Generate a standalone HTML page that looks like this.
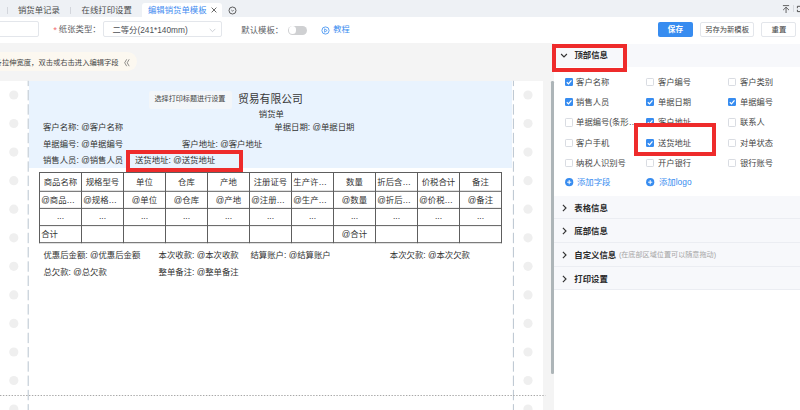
<!DOCTYPE html>
<html lang="zh-CN"><head><meta charset="utf-8"><title>编辑销货单模板</title><style>
html,body{margin:0;padding:0}
body{width:800px;height:410px;overflow:hidden;position:relative;background:#f4f4f4;font-family:"Liberation Sans","Noto Sans CJK SC",sans-serif}
.b{position:absolute;box-sizing:border-box}
.tx{position:absolute;line-height:1;white-space:nowrap;font-family:"Liberation Sans","Noto Sans CJK SC",sans-serif}
.tx span{position:absolute;left:0;top:0;width:100%;height:100%;overflow:visible;color:inherit;white-space:nowrap;line-height:1}
.ic{position:absolute;overflow:visible}
</style></head><body>
<div class="b" style="left:0.00px;top:0.00px;width:800.00px;height:17.40px;background:#eef1f5"></div>
<div class="b" style="left:142.00px;top:2.70px;width:80.00px;height:15.20px;background:#fff;border-radius:3px 3px 0 0"></div>
<div class="b" style="left:7.00px;top:7.30px;width:1.00px;height:6.50px;background:#d3d6dc"></div>
<div class="b" style="left:70.00px;top:7.30px;width:1.00px;height:6.50px;background:#d3d6dc"></div>
<div class="tx" style="left:17.90px;top:6.00px;width:42.00px;height:8.40px;font-size:8.40px;color:#4d4d4d"><span>销货单记录</span></div>
<div class="tx" style="left:81.60px;top:6.00px;width:50.40px;height:8.40px;font-size:8.40px;color:#4d4d4d"><span>在线打印设置</span></div>
<div class="tx" style="left:148.00px;top:6.00px;width:58.80px;height:8.40px;font-size:8.40px;color:#3f8cf0"><span>编辑销货单模板</span></div>
<svg class="ic" style="left:211px;top:7.2px" width="6" height="6" viewBox="0 0 6 6"><path d="M0.6 0.6L5.4 5.4M5.4 0.6L0.6 5.4" stroke="#444" stroke-width="0.8" fill="none"/></svg>
<svg class="ic" style="left:227.8px;top:5.5px" width="9" height="9" viewBox="0 0 9 9"><circle cx="4.5" cy="4.5" r="3.5" stroke="#444" stroke-width="0.85" fill="none"/><path d="M3.4 4.1L4.5 5.2L5.6 4.1" stroke="#444" stroke-width="0.8" fill="none"/></svg>
<svg class="ic" style="left:781px;top:4.5px" width="10" height="9" viewBox="0 0 10 9"><path d="M1.9 0.6H8.1M5.05 2.3V8M2.1 5.1L5.05 2.2L8 5.1" stroke="#4a4a4a" stroke-width="0.85" fill="none"/></svg>
<div class="b" style="left:792.80px;top:5.20px;width:1.00px;height:6.50px;background:#d6d9de"></div>
<svg class="ic" style="left:796px;top:5px" width="8" height="8" viewBox="0 0 8 8"><path d="M1.4 3.2V1.3H4M1.4 4.8V6.6H4" stroke="#444" stroke-width="0.9" fill="none"/></svg>
<div class="b" style="left:0.00px;top:17.40px;width:800.00px;height:25.30px;background:#fff"></div>
<div class="b" style="left:-5.00px;top:21.30px;width:43.80px;height:16.00px;background:#fff;border:1px solid #e3e6eb;border-radius:2px"></div>
<div class="tx" style="left:53.20px;top:24.60px;width:3.74px;height:9.60px;font-size:9.60px;color:#f26d6d"><span>*</span></div>
<div class="tx" style="left:58.80px;top:25.40px;width:42.00px;height:8.40px;font-size:8.40px;color:#606266"><span>纸张类型：</span></div>
<div class="b" style="left:103.20px;top:21.30px;width:118.80px;height:16.00px;background:#fff;border:1px solid #e3e6eb;border-radius:2px"></div>
<div class="tx" style="left:112.50px;top:25.65px;width:75.18px;height:8.30px;font-size:8.30px;color:#4e5156"><span>二等分(241*140mm)</span></div>
<svg class="ic" style="left:208.5px;top:27.5px" width="7" height="5" viewBox="0 0 7 5"><path d="M0.7 0.9L3.5 3.7L6.3 0.9" stroke="#c0c4cc" stroke-width="0.8" fill="none"/></svg>
<div class="tx" style="left:241.30px;top:25.60px;width:42.00px;height:8.40px;font-size:8.40px;color:#606266"><span>默认模板：</span></div>
<div class="b" style="left:288.00px;top:25.50px;width:19.10px;height:9.20px;background:#cfd0d2;border-radius:4.6px"></div>
<div class="b" style="left:288.90px;top:26.40px;width:7.40px;height:7.40px;background:#fff;border-radius:3.7px"></div>
<svg class="ic" style="left:321.3px;top:26px" width="9" height="9" viewBox="0 0 9 9"><circle cx="4.5" cy="4.5" r="3.6" stroke="#378cf0" stroke-width="0.8" fill="none"/><path d="M3.6 2.8L6.2 4.5L3.6 6.2Z" stroke="#378cf0" stroke-width="0.7" fill="none" stroke-linejoin="round"/></svg>
<div class="tx" style="left:333.20px;top:26.40px;width:16.40px;height:8.20px;font-size:8.20px;color:#378cf0"><span>教程</span></div>
<div class="b" style="left:657.60px;top:22.00px;width:35.60px;height:15.20px;background:#378cf0;border-radius:2px"></div>
<div class="tx" style="left:667.80px;top:25.80px;width:15.20px;height:7.60px;font-size:7.60px;color:#fff;font-weight:bold"><span>保存</span></div>
<div class="b" style="left:700.00px;top:22.00px;width:54.20px;height:15.20px;background:#fff;border:1px solid #e3e6eb;border-radius:2px"></div>
<div class="tx" style="left:705.20px;top:25.95px;width:43.80px;height:7.30px;font-size:7.30px;color:#444"><span>另存为新模板</span></div>
<div class="b" style="left:761.30px;top:22.00px;width:35.20px;height:15.20px;background:#fff;border:1px solid #e3e6eb;border-radius:2px"></div>
<div class="tx" style="left:771.50px;top:25.90px;width:14.80px;height:7.40px;font-size:7.40px;color:#444"><span>重置</span></div>
<div class="b" style="left:-12.00px;top:52.30px;width:148.70px;height:18.90px;background:#fcf8f0;border-radius:9.5px"></div>
<div class="tx" style="left:-5.40px;top:58.65px;width:124.10px;height:7.30px;font-size:7.30px;color:#474747"><span>条拉伸宽度，双击或右击进入编辑字段</span></div>
<svg class="ic" style="left:123.6px;top:58.5px" width="6" height="7.5" viewBox="0 0 6 7.5"><path d="M2.7 0.3L0.7 3.75L2.7 7.2M5.2 0.3L3.2 3.75L5.2 7.2" stroke="#555" stroke-width="0.65" fill="none"/></svg>
<div class="b" style="left:0.00px;top:80.80px;width:543.00px;height:330.00px;background:#fff"></div>
<div class="b" style="left:28.70px;top:80.80px;width:483.50px;height:87.70px;background:#e9f3fe"></div>
<svg class="ic" style="left:0;top:0" width="800" height="410" viewBox="0 0 800 410"><g fill="#efefef"><circle cx="13.8" cy="95.0" r="4.6"/><circle cx="528" cy="95.0" r="4.6"/><circle cx="13.8" cy="123.5" r="4.6"/><circle cx="528" cy="123.5" r="4.6"/><circle cx="13.8" cy="152.1" r="4.6"/><circle cx="528" cy="152.1" r="4.6"/><circle cx="13.8" cy="180.7" r="4.6"/><circle cx="528" cy="180.7" r="4.6"/><circle cx="13.8" cy="209.2" r="4.6"/><circle cx="528" cy="209.2" r="4.6"/><circle cx="13.8" cy="237.8" r="4.6"/><circle cx="528" cy="237.8" r="4.6"/><circle cx="13.8" cy="266.3" r="4.6"/><circle cx="528" cy="266.3" r="4.6"/><circle cx="13.8" cy="294.9" r="4.6"/><circle cx="528" cy="294.9" r="4.6"/><circle cx="13.8" cy="323.4" r="4.6"/><circle cx="528" cy="323.4" r="4.6"/><circle cx="13.8" cy="352.0" r="4.6"/><circle cx="528" cy="352.0" r="4.6"/><circle cx="13.8" cy="380.5" r="4.6"/><circle cx="528" cy="380.5" r="4.6"/><circle cx="13.8" cy="409.1" r="4.6"/><circle cx="528" cy="409.1" r="4.6"/></g><path d="M28.2 80.8V410M513.4 80.8V410" stroke="#b9c4cf" stroke-width="1" stroke-dasharray="10.4 3.88" stroke-dashoffset="5.1" fill="none"/><path d="M0 395.5H545.5" stroke="#a8a8a8" stroke-width="1" stroke-dasharray="1.4 1.5" fill="none"/></svg>
<div class="b" style="left:148.80px;top:91.00px;width:83.30px;height:17.80px;background:#f3f6f9;border-radius:2px"></div>
<div class="tx" style="left:154.50px;top:96.15px;width:71.00px;height:7.10px;font-size:7.10px;color:#444"><span>选择打印标题进行设置</span></div>
<div class="tx" style="left:238.00px;top:94.10px;width:64.80px;height:10.80px;font-size:10.80px;color:#383838"><span>贸易有限公司</span></div>
<div class="tx" style="left:258.80px;top:109.60px;width:25.20px;height:8.40px;font-size:8.40px;color:#333"><span>销货单</span></div>
<div class="tx" style="left:43.00px;top:122.80px;width:80.39px;height:8.40px;font-size:8.40px;color:#333"><span>客户名称: @客户名称</span></div>
<div class="tx" style="left:274.30px;top:122.80px;width:80.39px;height:8.40px;font-size:8.40px;color:#333"><span>单据日期: @单据日期</span></div>
<div class="tx" style="left:43.00px;top:139.60px;width:80.39px;height:8.40px;font-size:8.40px;color:#333"><span>单据编号: @单据编号</span></div>
<div class="tx" style="left:182.00px;top:139.60px;width:80.39px;height:8.40px;font-size:8.40px;color:#333"><span>客户地址: @客户地址</span></div>
<div class="tx" style="left:43.00px;top:156.40px;width:80.39px;height:8.40px;font-size:8.40px;color:#333"><span>销售人员: @销售人员</span></div>
<div class="tx" style="left:135.00px;top:156.40px;width:80.39px;height:8.40px;font-size:8.40px;color:#333"><span>送货地址: @送货地址</span></div>
<svg class="ic" style="left:0;top:0" width="800" height="410" viewBox="0 0 800 410"><path d="M39.5 172.0V243.2M81.5 172.0V243.2M123.5 172.0V243.2M165.5 172.0V243.2M207.5 172.0V243.2M249.5 172.0V243.2M291.5 172.0V243.2M333.5 172.0V243.2M375.5 172.0V243.2M417.5 172.0V243.2M459.5 172.0V243.2M501.5 172.0V243.2M39.0 172.5H502.0M39.0 191.3H502.0M39.0 208.4H502.0M39.0 225.6H502.0M39.0 242.7H502.0" stroke="#5e5e5e" stroke-width="1" fill="none"/></svg>
<div class="tx" style="left:43.70px;top:177.60px;width:33.60px;height:8.40px;font-size:8.40px;color:#333"><span>商品名称</span></div>
<div class="tx" style="left:41.30px;top:196.10px;width:33.73px;height:8.40px;font-size:8.40px;color:#333"><span>@商品…</span></div>
<div class="tx" style="left:57.00px;top:212.40px;width:7.00px;height:8.40px;font-size:8.40px;color:#333"><span>...</span></div>
<div class="tx" style="left:85.70px;top:177.60px;width:33.60px;height:8.40px;font-size:8.40px;color:#333"><span>规格型号</span></div>
<div class="tx" style="left:83.30px;top:196.10px;width:33.73px;height:8.40px;font-size:8.40px;color:#333"><span>@规格…</span></div>
<div class="tx" style="left:99.00px;top:212.40px;width:7.00px;height:8.40px;font-size:8.40px;color:#333"><span>...</span></div>
<div class="tx" style="left:136.10px;top:177.60px;width:16.80px;height:8.40px;font-size:8.40px;color:#333"><span>单位</span></div>
<div class="tx" style="left:131.84px;top:196.10px;width:25.33px;height:8.40px;font-size:8.40px;color:#333"><span>@单位</span></div>
<div class="tx" style="left:141.00px;top:212.40px;width:7.00px;height:8.40px;font-size:8.40px;color:#333"><span>...</span></div>
<div class="tx" style="left:178.10px;top:177.60px;width:16.80px;height:8.40px;font-size:8.40px;color:#333"><span>仓库</span></div>
<div class="tx" style="left:173.84px;top:196.10px;width:25.33px;height:8.40px;font-size:8.40px;color:#333"><span>@仓库</span></div>
<div class="tx" style="left:183.00px;top:212.40px;width:7.00px;height:8.40px;font-size:8.40px;color:#333"><span>...</span></div>
<div class="tx" style="left:220.10px;top:177.60px;width:16.80px;height:8.40px;font-size:8.40px;color:#333"><span>产地</span></div>
<div class="tx" style="left:215.84px;top:196.10px;width:25.33px;height:8.40px;font-size:8.40px;color:#333"><span>@产地</span></div>
<div class="tx" style="left:225.00px;top:212.40px;width:7.00px;height:8.40px;font-size:8.40px;color:#333"><span>...</span></div>
<div class="tx" style="left:253.70px;top:177.60px;width:33.60px;height:8.40px;font-size:8.40px;color:#333"><span>注册证号</span></div>
<div class="tx" style="left:251.30px;top:196.10px;width:33.73px;height:8.40px;font-size:8.40px;color:#333"><span>@注册…</span></div>
<div class="tx" style="left:267.00px;top:212.40px;width:7.00px;height:8.40px;font-size:8.40px;color:#333"><span>...</span></div>
<div class="tx" style="left:293.30px;top:177.60px;width:33.60px;height:8.40px;font-size:8.40px;color:#333"><span>生产许…</span></div>
<div class="tx" style="left:293.30px;top:196.10px;width:33.73px;height:8.40px;font-size:8.40px;color:#333"><span>@生产…</span></div>
<div class="tx" style="left:309.00px;top:212.40px;width:7.00px;height:8.40px;font-size:8.40px;color:#333"><span>...</span></div>
<div class="tx" style="left:346.10px;top:177.60px;width:16.80px;height:8.40px;font-size:8.40px;color:#333"><span>数量</span></div>
<div class="tx" style="left:341.84px;top:196.10px;width:25.33px;height:8.40px;font-size:8.40px;color:#333"><span>@数量</span></div>
<div class="tx" style="left:351.00px;top:212.40px;width:7.00px;height:8.40px;font-size:8.40px;color:#333"><span>...</span></div>
<div class="tx" style="left:377.30px;top:177.60px;width:33.60px;height:8.40px;font-size:8.40px;color:#333"><span>折后含…</span></div>
<div class="tx" style="left:377.30px;top:196.10px;width:33.73px;height:8.40px;font-size:8.40px;color:#333"><span>@折后…</span></div>
<div class="tx" style="left:393.00px;top:212.40px;width:7.00px;height:8.40px;font-size:8.40px;color:#333"><span>...</span></div>
<div class="tx" style="left:421.70px;top:177.60px;width:33.60px;height:8.40px;font-size:8.40px;color:#333"><span>价税合计</span></div>
<div class="tx" style="left:419.30px;top:196.10px;width:33.73px;height:8.40px;font-size:8.40px;color:#333"><span>@价税…</span></div>
<div class="tx" style="left:435.00px;top:212.40px;width:7.00px;height:8.40px;font-size:8.40px;color:#333"><span>...</span></div>
<div class="tx" style="left:472.10px;top:177.60px;width:16.80px;height:8.40px;font-size:8.40px;color:#333"><span>备注</span></div>
<div class="tx" style="left:467.84px;top:196.10px;width:25.33px;height:8.40px;font-size:8.40px;color:#333"><span>@备注</span></div>
<div class="tx" style="left:477.00px;top:212.40px;width:7.00px;height:8.40px;font-size:8.40px;color:#333"><span>...</span></div>
<div class="tx" style="left:41.20px;top:230.40px;width:16.80px;height:8.40px;font-size:8.40px;color:#333"><span>合计</span></div>
<div class="tx" style="left:341.84px;top:230.40px;width:25.33px;height:8.40px;font-size:8.40px;color:#333"><span>@合计</span></div>
<div class="tx" style="left:43.40px;top:251.40px;width:97.19px;height:8.40px;font-size:8.40px;color:#333"><span>优惠后金额: @优惠后金额</span></div>
<div class="tx" style="left:158.60px;top:251.40px;width:80.39px;height:8.40px;font-size:8.40px;color:#333"><span>本次收款: @本次收款</span></div>
<div class="tx" style="left:250.50px;top:251.40px;width:80.39px;height:8.40px;font-size:8.40px;color:#333"><span>结算账户: @结算账户</span></div>
<div class="tx" style="left:389.80px;top:251.40px;width:80.39px;height:8.40px;font-size:8.40px;color:#333"><span>本次欠款: @本次欠款</span></div>
<div class="tx" style="left:43.40px;top:267.90px;width:63.59px;height:8.40px;font-size:8.40px;color:#333"><span>总欠款: @总欠款</span></div>
<div class="tx" style="left:158.60px;top:267.90px;width:80.39px;height:8.40px;font-size:8.40px;color:#333"><span>整单备注: @整单备注</span></div>
<div class="b" style="left:553.70px;top:42.30px;width:246.30px;height:368.00px;background:#fff"></div>
<div class="b" style="left:551.10px;top:81.00px;width:2.60px;height:293.00px;background:#adb5b8;border-radius:1.3px"></div>
<div class="b" style="left:553.70px;top:43.50px;width:246.30px;height:23.50px;background:#f7f8fb"></div>
<svg class="ic" style="left:560.4px;top:53.1px" width="8" height="5" viewBox="0 0 8 5"><path d="M1.1 1L4 3.9L6.9 1" stroke="#333" stroke-width="1.15" fill="none"/></svg>
<div class="tx" style="left:574.40px;top:51.20px;width:33.60px;height:8.40px;font-size:8.40px;color:#2b2b2b;font-weight:bold"><span>顶部信息</span></div>
<div class="b" style="left:564.50px;top:78.20px;width:8.20px;height:8.20px;background:#378cf0;border-radius:1.2px"><svg style="position:absolute;left:0;top:0" width="8.2" height="8.2" viewBox="0 0 8.2 8.2"><path d="M1.8 4.3L3.5 5.9L6.5 2.4" stroke="#fff" stroke-width="1.25" fill="none"/></svg></div>
<div class="tx" style="left:576.10px;top:78.15px;width:33.20px;height:8.30px;font-size:8.30px;color:#464646"><span>客户名称</span></div>
<div class="b" style="left:646.30px;top:78.20px;width:8.20px;height:8.20px;background:#fff;border:0.8px solid #d9dce2;border-radius:1.2px"></div>
<div class="tx" style="left:657.90px;top:78.15px;width:33.20px;height:8.30px;font-size:8.30px;color:#464646"><span>客户编号</span></div>
<div class="b" style="left:728.30px;top:78.20px;width:8.20px;height:8.20px;background:#fff;border:0.8px solid #d9dce2;border-radius:1.2px"></div>
<div class="tx" style="left:739.90px;top:78.15px;width:33.20px;height:8.30px;font-size:8.30px;color:#464646"><span>客户类别</span></div>
<div class="b" style="left:564.50px;top:98.30px;width:8.20px;height:8.20px;background:#378cf0;border-radius:1.2px"><svg style="position:absolute;left:0;top:0" width="8.2" height="8.2" viewBox="0 0 8.2 8.2"><path d="M1.8 4.3L3.5 5.9L6.5 2.4" stroke="#fff" stroke-width="1.25" fill="none"/></svg></div>
<div class="tx" style="left:576.10px;top:98.25px;width:33.20px;height:8.30px;font-size:8.30px;color:#464646"><span>销售人员</span></div>
<div class="b" style="left:646.30px;top:98.30px;width:8.20px;height:8.20px;background:#378cf0;border-radius:1.2px"><svg style="position:absolute;left:0;top:0" width="8.2" height="8.2" viewBox="0 0 8.2 8.2"><path d="M1.8 4.3L3.5 5.9L6.5 2.4" stroke="#fff" stroke-width="1.25" fill="none"/></svg></div>
<div class="tx" style="left:657.90px;top:98.25px;width:33.20px;height:8.30px;font-size:8.30px;color:#464646"><span>单据日期</span></div>
<div class="b" style="left:728.30px;top:98.30px;width:8.20px;height:8.20px;background:#378cf0;border-radius:1.2px"><svg style="position:absolute;left:0;top:0" width="8.2" height="8.2" viewBox="0 0 8.2 8.2"><path d="M1.8 4.3L3.5 5.9L6.5 2.4" stroke="#fff" stroke-width="1.25" fill="none"/></svg></div>
<div class="tx" style="left:739.90px;top:98.25px;width:33.20px;height:8.30px;font-size:8.30px;color:#464646"><span>单据编号</span></div>
<div class="b" style="left:564.50px;top:118.40px;width:8.20px;height:8.20px;background:#fff;border:0.8px solid #d9dce2;border-radius:1.2px"></div>
<div class="tx" style="left:576.10px;top:118.35px;width:60.86px;height:8.30px;font-size:8.30px;color:#464646"><span>单据编号(条形…</span></div>
<div class="b" style="left:646.30px;top:118.40px;width:8.20px;height:8.20px;background:#378cf0;border-radius:1.2px"><svg style="position:absolute;left:0;top:0" width="8.2" height="8.2" viewBox="0 0 8.2 8.2"><path d="M1.8 4.3L3.5 5.9L6.5 2.4" stroke="#fff" stroke-width="1.25" fill="none"/></svg></div>
<div class="tx" style="left:657.90px;top:118.35px;width:33.20px;height:8.30px;font-size:8.30px;color:#464646"><span>客户地址</span></div>
<div class="b" style="left:728.30px;top:118.40px;width:8.20px;height:8.20px;background:#fff;border:0.8px solid #d9dce2;border-radius:1.2px"></div>
<div class="tx" style="left:739.90px;top:118.35px;width:24.90px;height:8.30px;font-size:8.30px;color:#464646"><span>联系人</span></div>
<div class="b" style="left:564.50px;top:138.80px;width:8.20px;height:8.20px;background:#fff;border:0.8px solid #d9dce2;border-radius:1.2px"></div>
<div class="tx" style="left:576.10px;top:138.75px;width:33.20px;height:8.30px;font-size:8.30px;color:#464646"><span>客户手机</span></div>
<div class="b" style="left:646.30px;top:138.80px;width:8.20px;height:8.20px;background:#378cf0;border-radius:1.2px"><svg style="position:absolute;left:0;top:0" width="8.2" height="8.2" viewBox="0 0 8.2 8.2"><path d="M1.8 4.3L3.5 5.9L6.5 2.4" stroke="#fff" stroke-width="1.25" fill="none"/></svg></div>
<div class="tx" style="left:657.90px;top:138.75px;width:33.20px;height:8.30px;font-size:8.30px;color:#464646"><span>送货地址</span></div>
<div class="b" style="left:728.30px;top:138.80px;width:8.20px;height:8.20px;background:#fff;border:0.8px solid #d9dce2;border-radius:1.2px"></div>
<div class="tx" style="left:739.90px;top:138.75px;width:33.20px;height:8.30px;font-size:8.30px;color:#464646"><span>对单状态</span></div>
<div class="b" style="left:564.50px;top:159.20px;width:8.20px;height:8.20px;background:#fff;border:0.8px solid #d9dce2;border-radius:1.2px"></div>
<div class="tx" style="left:576.10px;top:159.15px;width:49.80px;height:8.30px;font-size:8.30px;color:#464646"><span>纳税人识别号</span></div>
<div class="b" style="left:646.30px;top:159.20px;width:8.20px;height:8.20px;background:#fff;border:0.8px solid #d9dce2;border-radius:1.2px"></div>
<div class="tx" style="left:657.90px;top:159.15px;width:33.20px;height:8.30px;font-size:8.30px;color:#464646"><span>开户银行</span></div>
<div class="b" style="left:728.30px;top:159.20px;width:8.20px;height:8.20px;background:#fff;border:0.8px solid #d9dce2;border-radius:1.2px"></div>
<div class="tx" style="left:739.90px;top:159.15px;width:33.20px;height:8.30px;font-size:8.30px;color:#464646"><span>银行账号</span></div>
<svg class="ic" style="left:564.8px;top:178.1px" width="8.4" height="8.4" viewBox="0 0 8.4 8.4"><circle cx="4.2" cy="4.2" r="4.1" fill="#378cf0"/><path d="M4.2 2.1V6.3M2.1 4.2H6.3" stroke="#fff" stroke-width="1" fill="none"/></svg>
<div class="tx" style="left:577.00px;top:178.10px;width:33.60px;height:8.40px;font-size:8.40px;color:#378cf0"><span>添加字段</span></div>
<svg class="ic" style="left:646.4px;top:178.1px" width="8.4" height="8.4" viewBox="0 0 8.4 8.4"><circle cx="4.2" cy="4.2" r="4.1" fill="#378cf0"/><path d="M4.2 2.1V6.3M2.1 4.2H6.3" stroke="#fff" stroke-width="1" fill="none"/></svg>
<div class="tx" style="left:659.00px;top:178.10px;width:34.78px;height:8.40px;font-size:8.40px;color:#378cf0"><span>添加logo</span></div>
<div class="b" style="left:553.70px;top:195.50px;width:246.30px;height:23.80px;background:#f7f8fb;border-bottom:1px solid #ebedf2"></div>
<svg class="ic" style="left:561.7px;top:203.7px" width="5" height="8" viewBox="0 0 5 8"><path d="M0.9 0.8L4 4L0.9 7.2" stroke="#333" stroke-width="1.15" fill="none"/></svg>
<div class="tx" style="left:574.30px;top:203.50px;width:33.60px;height:8.40px;font-size:8.40px;color:#2b2b2b;font-weight:bold"><span>表格信息</span></div>
<div class="b" style="left:553.70px;top:219.20px;width:246.30px;height:23.80px;background:#f7f8fb;border-bottom:1px solid #ebedf2"></div>
<svg class="ic" style="left:561.7px;top:227.4px" width="5" height="8" viewBox="0 0 5 8"><path d="M0.9 0.8L4 4L0.9 7.2" stroke="#333" stroke-width="1.15" fill="none"/></svg>
<div class="tx" style="left:574.30px;top:227.20px;width:33.60px;height:8.40px;font-size:8.40px;color:#2b2b2b;font-weight:bold"><span>底部信息</span></div>
<div class="b" style="left:553.70px;top:243.00px;width:246.30px;height:23.80px;background:#f7f8fb;border-bottom:1px solid #ebedf2"></div>
<svg class="ic" style="left:561.7px;top:251.2px" width="5" height="8" viewBox="0 0 5 8"><path d="M0.9 0.8L4 4L0.9 7.2" stroke="#333" stroke-width="1.15" fill="none"/></svg>
<div class="tx" style="left:574.30px;top:251.00px;width:42.00px;height:8.40px;font-size:8.40px;color:#2b2b2b;font-weight:bold"><span>自定义信息</span></div>
<div class="tx" style="left:618.90px;top:251.84px;width:97.30px;height:7.12px;font-size:7.12px;color:#a6a6a6"><span>(在底部区域位置可以随意拖动)</span></div>
<div class="b" style="left:553.70px;top:266.70px;width:246.30px;height:23.80px;background:#f7f8fb;border-bottom:1px solid #ebedf2"></div>
<svg class="ic" style="left:561.7px;top:274.9px" width="5" height="8" viewBox="0 0 5 8"><path d="M0.9 0.8L4 4L0.9 7.2" stroke="#333" stroke-width="1.15" fill="none"/></svg>
<div class="tx" style="left:574.30px;top:274.70px;width:33.60px;height:8.40px;font-size:8.40px;color:#2b2b2b;font-weight:bold"><span>打印设置</span></div>
<div class="b" style="left:551.60px;top:43.80px;width:75.40px;height:28.40px;border:4px solid #ee2b2b"></div>
<div class="b" style="left:125.60px;top:149.80px;width:117.20px;height:22.10px;border:4.4px solid #ee2b2b"></div>
<div class="b" style="left:633.90px;top:123.00px;width:82.00px;height:32.50px;border:4px solid #ee2b2b"></div>
</body></html>
